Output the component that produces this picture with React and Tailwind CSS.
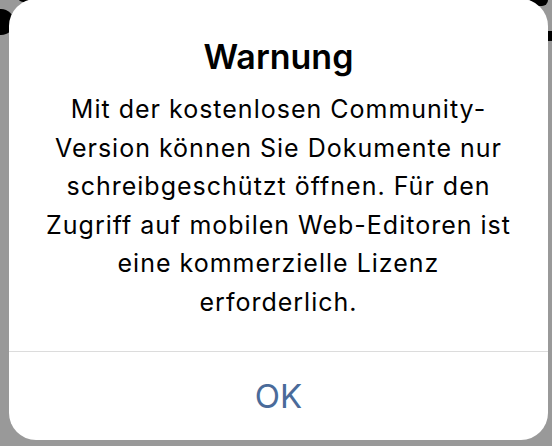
export default function App() {
  const lines = [
    "Mit der kostenlosen Community-",
    "Version können Sie Dokumente nur",
    "schreibgeschützt öffnen. Für den",
    "Zugriff auf mobilen Web-Editoren ist",
    "eine kommerzielle Lizenz",
    "erforderlich.",
  ];
  return (
    <div
      className="relative w-[552px] h-[446px] overflow-hidden bg-[#999999]"
      style={{ fontFamily: "Inter, 'Liberation Sans', sans-serif" }}
    >
      <div className="absolute left-[-12px] top-[9px] w-[26px] h-[26px] rounded-full bg-black" />
      <div className="absolute left-[18px] top-[-8px] w-[20px] h-[10px] rounded-full bg-black" />
      <div className="absolute right-[4px] top-[-6px] w-[18px] h-[12px] rounded-full bg-black" />
      <div className="absolute right-0 top-[31px] w-[6px] h-[10px] bg-black" />
      <div className="relative ml-[9px] mt-[-1px] w-[539px] h-[441px] bg-white rounded-[27px] flex flex-col">
        <div className="pt-[38px] text-center text-[34px] leading-[40px] font-semibold text-black">
          Warnung
        </div>
        <div className="mt-[13px] pb-[30px] text-center text-[25px] leading-[38.5px] text-black tracking-[1px]">
          {lines.map((l, i) => (
            <div key={i}>{l}</div>
          ))}
        </div>
        <div className="border-t border-[#dcdcdc] flex-1 flex items-center justify-center">
          <span className="text-[33px] leading-[33px] text-[#4a6b9a]">OK</span>
        </div>
      </div>
    </div>
  );
}
